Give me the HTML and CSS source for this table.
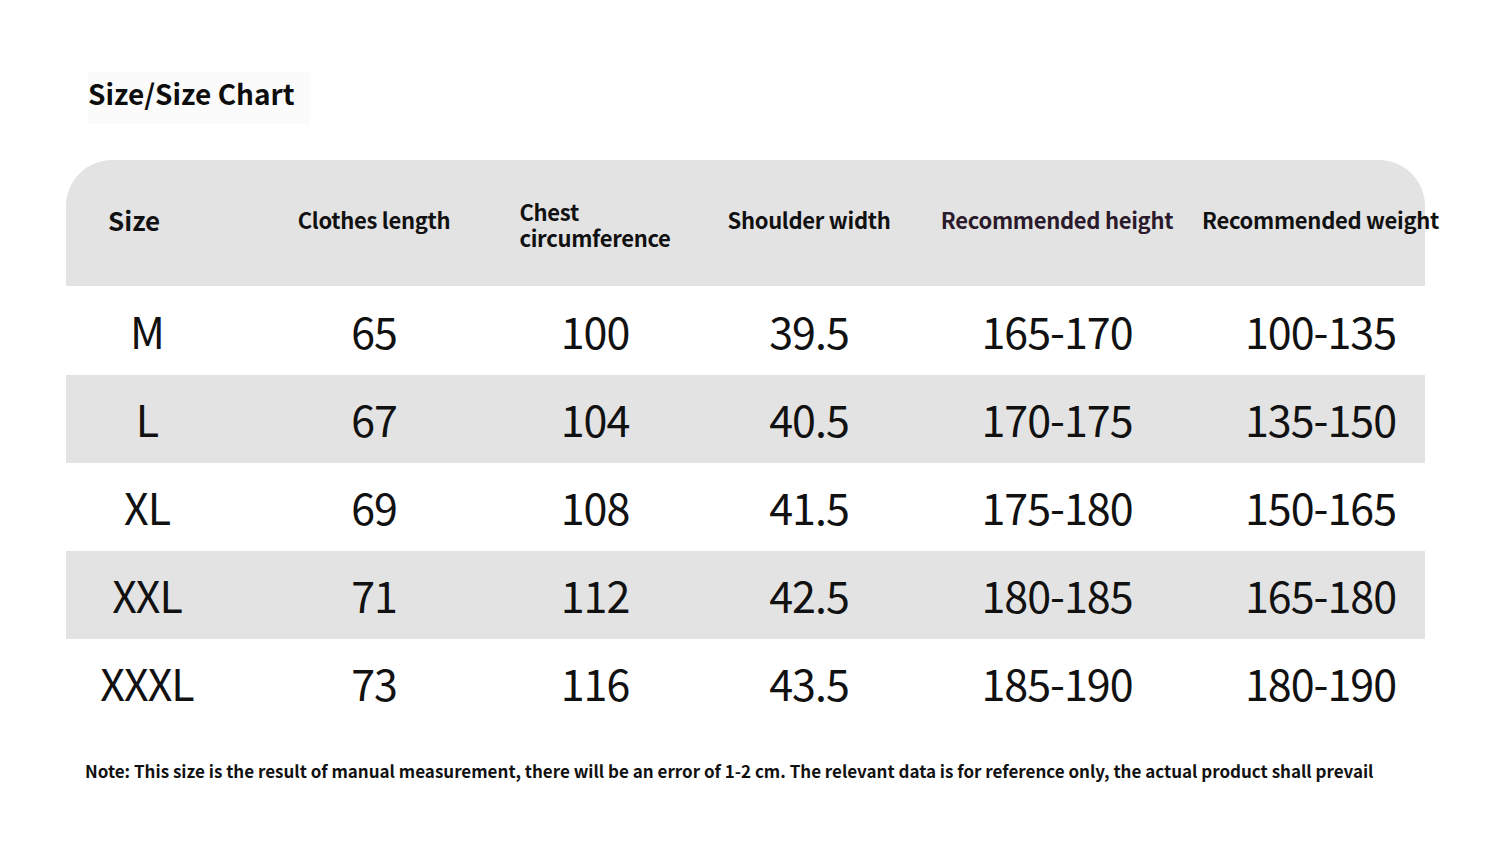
FILE: index.html
```html
<!DOCTYPE html>
<html lang="en">
<head>
<meta charset="utf-8">
<title>Size/Size Chart</title>
<link rel="stylesheet" href="styles.css">
</head>
<body>
<div class="page">
  <div class="title-wrap"><h1 class="title">Size/Size Chart</h1></div>
  <div class="chart">
    <div class="row head">
      <div class="cell c1 size-head">Size</div>
      <div class="cell">Clothes length</div>
      <div class="cell"><span class="two-line"><span class="line">Chest</span><span class="line">circumference</span></span></div>
      <div class="cell">Shoulder width</div>
      <div class="cell purple">Recommended height</div>
      <div class="cell last">Recommended weight</div>
    </div>
    <div class="row">
      <div class="cell c1">M</div><div class="cell">65</div><div class="cell">100</div><div class="cell">39.5</div><div class="cell">165-170</div><div class="cell last">100-135</div>
    </div>
    <div class="row gray">
      <div class="cell c1">L</div><div class="cell">67</div><div class="cell">104</div><div class="cell">40.5</div><div class="cell">170-175</div><div class="cell last">135-150</div>
    </div>
    <div class="row">
      <div class="cell c1">XL</div><div class="cell">69</div><div class="cell">108</div><div class="cell">41.5</div><div class="cell">175-180</div><div class="cell last">150-165</div>
    </div>
    <div class="row gray">
      <div class="cell c1">XXL</div><div class="cell">71</div><div class="cell">112</div><div class="cell">42.5</div><div class="cell">180-185</div><div class="cell last">165-180</div>
    </div>
    <div class="row">
      <div class="cell c1">XXXL</div><div class="cell">73</div><div class="cell">116</div><div class="cell">43.5</div><div class="cell">185-190</div><div class="cell last">180-190</div>
    </div>
  </div>
  <p class="note">Note: This size is the result of manual measurement, there will be an error of 1-2 cm. The relevant data is for reference only, the actual product shall prevail</p>
</div>
</body>
</html>
```

FILE: styles.css
```css
* { box-sizing: border-box; }
html, body { margin: 0; padding: 0; background: #ffffff; }
body {
  font-family: "Noto Sans CJK SC", "Noto Sans", sans-serif;
  color: #111111;
}
.page {
  width: 1500px;
  height: 863px;
  padding: 72px 0 0 66px;
}
.title-wrap {
  margin-left: 22px;
  width: 222px;
  height: 52px;
  padding-bottom: 11px;
  background: #fbfbfb;
  display: flex;
  align-items: center;
}
.title {
  margin: 0;
  font-size: 28px;
  font-weight: 700;
  line-height: 1;
  color: #0d0d0d;
  white-space: nowrap;
}
.chart {
  margin-top: 36px;
  width: 1359px;
}
.row {
  display: grid;
  grid-template-columns: 162px 292px 150px 278px 218px 259px;
  height: 88px;
  background: #ffffff;
}
.row.gray { background: #e3e3e3; }
.row.head {
  height: 126px;
  background: #e3e3e3;
  border-radius: 46px 46px 0 0;
}
.row.head + .row { height: 89px; }
.cell {
  display: flex;
  align-items: center;
  justify-content: center;
  white-space: nowrap;
  font-size: 43px;
  letter-spacing: -1px;
  font-weight: 400;
  color: #111111;
  padding-bottom: 2px;
}
.cell.last { padding-left: 50px; }
.head .cell {
  font-size: 22px;
  letter-spacing: -0.3px;
  font-weight: 700;
  padding-bottom: 8px;
  color: #111111;
}
.head .cell.size-head {
  justify-content: flex-start;
  padding-left: 42px;
  font-size: 26px;
  letter-spacing: 0;
}
.head .cell.purple { color: #2b1a2b; }
.two-line {
  display: flex;
  flex-direction: column;
  gap: 2px;
  text-align: left;
  margin-top: 9px;
}
.line {
  display: block;
  line-height: 24px;
}
.note {
  margin: 31px 0 0 19px;
  font-size: 17px;
  font-weight: 700;
  color: #111111;
  white-space: nowrap;
}
```
